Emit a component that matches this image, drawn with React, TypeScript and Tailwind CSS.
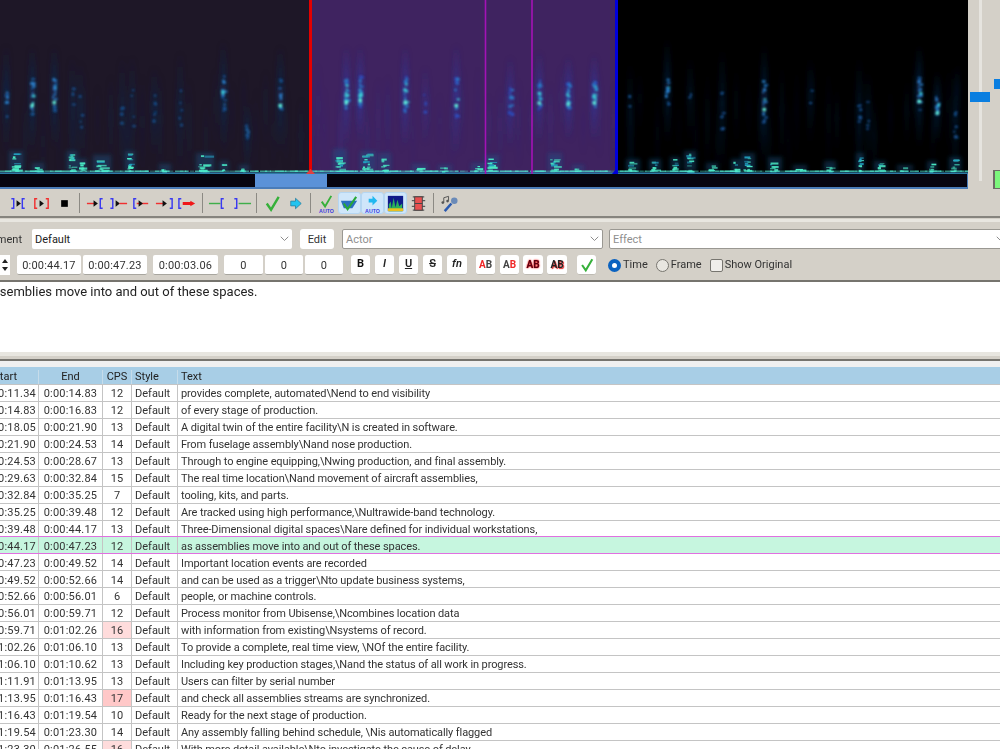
import React from "react";

const FONT = "font-['Roboto','Noto_Sans',sans-serif]";

function makeRng(seed: number) {
  let s = seed;
  return () => {
    s = (s * 16807) % 2147483647;
    return (s - 1) / 2147483646;
  };
}

type Streak = [number, number, number, number];
// x, top, bottom, strength
const STREAKS: Streak[] = [
  [6, 58, 130, 0.3], [32, 60, 128, 0.6], [54, 60, 122, 0.6], [72, 70, 135, 0.12], [80, 75, 140, 0.12],
  [122, 70, 150, 0.12], [132, 70, 140, 0.12], [154, 80, 130, 0.2], [180, 65, 150, 0.15], [223, 55, 125, 0.45],
  [247, 115, 145, 0.35], [280, 60, 128, 0.5], [346, 60, 122, 0.75], [360, 60, 118, 0.75], [405, 60, 122, 0.75],
  [456, 58, 130, 0.6], [425, 80, 120, 0.15], [510, 70, 125, 0.45], [539, 65, 118, 0.65], [568, 70, 115, 0.75],
  [594, 68, 115, 0.75], [630, 75, 150, 0.08], [667, 52, 118, 0.4], [690, 70, 115, 0.08], [722, 62, 145, 0.22],
  [764, 58, 138, 0.55], [810, 70, 120, 0.06], [859, 70, 150, 0.2], [868, 85, 140, 0.12], [919, 58, 122, 0.6],
  [937, 85, 118, 0.55], [955, 80, 155, 0.22],
];

// x, width, peak height above the floor
const BLOBS: [number, number, number][] = [
  [16, 10, 18], [38, 8, 6], [72, 7, 18], [82, 6, 10], [102, 14, 14], [130, 6, 18], [165, 8, 5], [205, 14, 16],
  [224, 5, 8], [244, 6, 4], [340, 10, 20], [368, 12, 18], [385, 8, 16], [420, 12, 5], [445, 10, 4], [478, 10, 6],
  [492, 10, 14], [555, 10, 16], [578, 8, 4], [633, 10, 10], [655, 8, 10], [675, 6, 12], [690, 8, 18], [712, 8, 6],
  [736, 6, 10], [748, 10, 16], [775, 10, 12], [800, 10, 4], [830, 8, 8], [860, 4, 16], [880, 8, 8], [905, 12, 4],
  [932, 6, 8], [955, 8, 12],
];

function Spectrogram() {
  const rng = makeRng(4242);
  const haze: React.ReactNode[] = [];
  const dots: React.ReactNode[] = [];
  for (let x = 4; x < 964; x += 7 + rng() * 12) {
    const top = 60 + rng() * 40;
    const sel = x > 310 && x < 616;
    haze.push(
      <rect key={`z${x}`} x={x} y={top} width={2 + rng() * 3} height={60 + rng() * 50}
        fill={sel ? "url(#fs)" : "url(#fn)"} opacity={0.1 + rng() * 0.2} />
    );
  }
  STREAKS.forEach(([x, top, bottom, k], i) => {
    const inSel = x > 310 && x < 616;
    haze.push(
      <rect key={`g${i}`} x={x - 3} y={top - 14} width={6.5} height={bottom - top + 40} rx={3}
        fill={inSel ? "url(#fs)" : "url(#fn)"} opacity={0.25 + k * 0.75} />
    );
    const n = Math.round(k * 30);
    const span = (bottom - top) * 0.55;
    const cy = (top + bottom) / 2 + 2;
    for (let j = 0; j < n; j++) {
      const y = cy + (rng() - 0.5) * span;
      const mid = 1 - Math.abs(y - cy) / (span * 0.7);
      const v = k * mid * (0.4 + rng() * 0.7);
      const c = v > 0.42 ? "#3ccfd8" : v > 0.2 ? "#2a7ec8" : inSel ? "#2d50c0" : "#174f8c";
      dots.push(<rect key={`d${i}-${j}`} x={x - 2 + rng() * 3} y={y} width={1.4 + rng() * 2.2} height={1.4 + rng() * 1.8} fill={c} />);
    }
    if (k >= 0.5) {
      dots.push(<rect key={`h${i}`} x={x - 1.5} y={cy + 8} width={3.5} height={3} fill="#62f0d8" />);
    }
  });
  const low: React.ReactNode[] = [];
  BLOBS.forEach(([x, w, h], i) => {
    haze.push(<rect key={`m${i}`} x={x - w / 2 - 2} y={171 - h - 2} width={w + 4} height={h + 2} fill="#155a8c" opacity={0.4} />);
    const n = Math.max(4, Math.round(h / 1.3));
    for (let j = 0; j < n; j++) {
      const y = 171 - Math.pow(rng(), 1.4) * h;
      const near = y > 165;
      low.push(
        <rect key={`b${i}-${j}`} x={x - w / 2 + rng() * w * 0.5} y={y} width={2 + rng() * w * 0.6} height={1 + rng() * 1.3}
          fill={near || rng() > 0.45 ? "#4aeac4" : "#22a0c0"} opacity={0.5 + rng() * 0.5} />
      );
    }
  });
  for (let x = 0; x < 966; x += 5) {
    low.push(<rect key={`l${x}`} x={x} y={170.6} width={3 + rng() * 11} height={1.2} fill="#52ecd0" opacity={0.3 + rng() * 0.6} />);
  }
  return (
    <svg className="block w-[968px] h-[174px]" viewBox="0 0 968 174">
      <defs>
        <filter id="b1" x="-5%" y="-5%" width="110%" height="110%">
          <feGaussianBlur stdDeviation="0.8" />
        </filter>
        <filter id="b2" x="-5%" y="-5%" width="110%" height="110%">
          <feGaussianBlur stdDeviation="2" />
        </filter>
        <filter id="b3" x="-5%" y="-5%" width="110%" height="110%">
          <feGaussianBlur stdDeviation="0.6" />
        </filter>
        <linearGradient id="fs" x1="0" y1="0" x2="0" y2="1">
          <stop offset="0" stopColor="#2a3aa8" stopOpacity="0" />
          <stop offset="0.45" stopColor="#2a40b4" stopOpacity="0.65" />
          <stop offset="1" stopColor="#2a3aa8" stopOpacity="0" />
        </linearGradient>
        <linearGradient id="fn" x1="0" y1="0" x2="0" y2="1">
          <stop offset="0" stopColor="#102a58" stopOpacity="0" />
          <stop offset="0.45" stopColor="#103266" stopOpacity="0.8" />
          <stop offset="1" stopColor="#102a58" stopOpacity="0" />
        </linearGradient>
      </defs>
      <rect x="0" y="0" width="310" height="174" fill="#1e1727" />
      <rect x="310" y="0" width="306" height="174" fill="#3f2360" />
      <rect x="616" y="0" width="352" height="174" fill="#000" />
      <g filter="url(#b2)">{haze}</g>
      <g filter="url(#b1)">{dots}</g>
      <g filter="url(#b3)">{low}</g>
      <rect x="0" y="172.4" width="968" height="1.6" fill="#2c7aa4" />
      <rect x="309" y="0" width="3" height="174" fill="#e40000" />
      <path d="M306 174 L310.5 169 L315 174Z" fill="#e04040" />
      <rect x="484.7" y="0" width="1.6" height="174" fill="#a313b5" />
      <rect x="531.2" y="0" width="1.6" height="174" fill="#a313b5" />
      <rect x="615" y="0" width="3" height="174" fill="#0000dc" />
      <path d="M612 174 L616 169 L618 174Z" fill="#0000dc" />
    </svg>
  );
}

const BL = "#3a3af0";
const RD = "#f03030";
const GR = "#3fae4a";

function LB({ x, c = BL }: { x: number; c?: string }) {
  return <path d={`M${x + 2.5} 6 H${x} V16 H${x + 2.5}`} fill="none" stroke={c} strokeWidth="1.5" />;
}
function RB({ x, c = BL }: { x: number; c?: string }) {
  return <path d={`M${x - 2.5} 6 H${x} V16 H${x - 2.5}`} fill="none" stroke={c} strokeWidth="1.5" />;
}
function Tri({ x }: { x: number }) {
  return <path d={`M${x} 7.5 L${x + 4.5} 11 L${x} 14.5Z`} fill="#111" />;
}
function Ln({ a, b, c = RD }: { a: number; b: number; c?: string }) {
  return <path d={`M${a} 11 H${b}`} stroke={c} strokeWidth="1.5" />;
}
const Check = () => <path d="M5 11 L9.5 17.5 L17.5 4" fill="none" stroke="#36b03a" strokeWidth="2.5" />;
const Arrow = () => <path d="M6 8.5 H11 V5.5 L17 11 L11 16.5 V13.5 H6Z" fill="#22c4f0" stroke="#2a7a9a" strokeWidth="0.8" />;

const ICONS: React.ReactNode[] = [
  <><RB x={6} /><Tri x={9} /><LB x={15} /></>,
  <><LB x={4} c={RD} /><Tri x={9} /><RB x={18} c={RD} /></>,
  <rect x="7.5" y="7.5" width="7" height="7" fill="#000" />,
  <><Ln a={2} b={10} /><Tri x={9} /><LB x={16} /></>,
  <><RB x={5} /><Tri x={8} /><Ln a={12} b={20} /></>,
  <><LB x={3} /><Ln a={6} b={18} /><Tri x={8} /></>,
  <><Ln a={2} b={10} /><Tri x={9} /><RB x={19} /></>,
  <><LB x={2} /><path d="M6 9.5 H14 V8 L19 11 L14 14 V12.5 H6Z" fill="#f01818" /></>,
  <><Ln a={1} b={13} c={GR} /><LB x={14} /></>,
  <><RB x={6} /><Ln a={8} b={21} c={GR} /></>,
];

function TB({ children, active }: { children: React.ReactNode; active?: boolean }) {
  return (
    <div className={`w-[23px] h-[22px] flex items-center justify-center rounded-[3px] shrink-0 ${active ? "bg-[#cfe6fa] border border-[#b5d6f2]" : ""}`}>
      <svg viewBox="0 0 22 22" className="w-[21px] h-[21px] shrink-0">{children}</svg>
    </div>
  );
}
const Sep = () => <div className="w-[1.5px] h-[20px] bg-[#8c8a84] ml-[2.5px] mr-[4px] shrink-0" />;

const AutoLabel = () => (
  <text x="11" y="21" textAnchor="middle" fontSize="5.5" fontFamily="Liberation Sans, sans-serif" fontWeight="700" fill="#3a3ae0">AUTO</text>
);

function Toolbar() {
  return (
    <div className="h-[29px] bg-[#d4d0c8] border-b-2 border-[#86847e] flex items-center pl-[7px] pt-[1px] shrink-0">
      {ICONS.slice(0, 3).map((c, i) => <TB key={i}>{c}</TB>)}
      <Sep />
      {ICONS.slice(3, 8).map((c, i) => <TB key={i}>{c}</TB>)}
      <Sep />
      {ICONS.slice(8, 10).map((c, i) => <TB key={i}>{c}</TB>)}
      <Sep />
      <TB><Check /></TB>
      <TB><Arrow /></TB>
      <Sep />
      <TB>
        <path d="M6 9 L9.5 14 L16 3" fill="none" stroke="#36b03a" strokeWidth="2" />
        <AutoLabel />
      </TB>
      <TB active>
        <path d="M2 8 H15 L19 8 L14 16 H5Z" fill="#2a6ec0" />
        <path d="M5 11 L9 17 L18 4" fill="none" stroke="#28a838" strokeWidth="2.2" />
      </TB>
      <TB active>
        <path d="M7 6 H11 V3 L16 8 L11 13 V10 H7Z" fill="#22b8f0" />
        <AutoLabel />
      </TB>
      <TB active>
        <rect x="3" y="3" width="16" height="16" fill="#101a8a" />
        <path d="M4 19 V12 L6 9 L7 16 L9 5 L11 15 L13 7 L15 14 L18 11 V19Z" fill="#2ab05a" />
        <path d="M3 19 V16 H19 V19Z" fill="#e8c020" />
      </TB>
      <TB>
        <path d="M5 4 H17 M5 18 H17 M4 8 H18 M4 14 H18" stroke="#5a5a5a" strokeWidth="1.4" />
        <rect x="7" y="4" width="8" height="14" fill="#e85050" stroke="#444" strokeWidth="1" />
        <path d="M7 11 H15" stroke="#444" strokeWidth="1" />
      </TB>
      <Sep />
      <TB>
        <path d="M5 10 V5 L10 3.5 V8" fill="none" stroke="#555" strokeWidth="1" />
        <circle cx="4" cy="10" r="1.4" fill="#555" />
        <circle cx="9" cy="8.5" r="1.4" fill="#555" />
        <path d="M6 19 L13 11" stroke="#2a5ab0" strokeWidth="2.6" />
        <circle cx="16" cy="8" r="3.4" fill="#6a8ab8" />
      </TB>
    </div>
  );
}

function Chevron() {
  return (
    <svg viewBox="0 0 12 8" className="w-[9px] h-[6px] shrink-0">
      <path d="M1 1 L6 6 L11 1" fill="none" stroke="#8a8a8a" strokeWidth="1.3" />
    </svg>
  );
}

function Combo({ label, w, muted, bordered }: { label: string; w: string; muted?: boolean; bordered?: boolean }) {
  return (
    <div className={`${w} h-[20px] bg-white rounded-[2px] flex items-center justify-between pl-[3px] pr-[3px] shrink-0 ${bordered ? "border border-[#9a9892]" : ""}`}>
      <span className={`pt-[2px] ${muted ? "text-[#8f8f8f]" : "text-[#222]"}`}>{label}</span>
      <Chevron />
    </div>
  );
}

function Field({ v, w, ml }: { v: string; w: string; ml: string }) {
  return (
    <div className={`${w} ${ml} h-[20px] pt-[3px] bg-white border-b border-[#a8a69f] rounded-[2px] flex items-center justify-center shrink-0 text-[#333] tracking-[0.2px]`}>
      {v}
    </div>
  );
}

function Btn({ w = "w-[19px]", ml, children }: { w?: string; ml: string; children: React.ReactNode }) {
  return (
    <div className={`${w} ${ml} h-[20px] bg-white rounded-[3px] border-b border-[#bdbab2] flex items-center justify-center shrink-0`}>
      {children}
    </div>
  );
}

type Row = [string, string, number, string];
const ROWS: Row[] = [
  ["0:00:11.34", "0:00:14.83", 12, "provides complete, automated\\Nend to end visibility"],
  ["0:00:14.83", "0:00:16.83", 12, "of every stage of production."],
  ["0:00:18.05", "0:00:21.90", 13, "A digital twin of the entire facility\\N is created in software."],
  ["0:00:21.90", "0:00:24.53", 14, "From fuselage assembly\\Nand nose production."],
  ["0:00:24.53", "0:00:28.67", 13, "Through to engine equipping,\\Nwing production, and final assembly."],
  ["0:00:29.63", "0:00:32.84", 15, "The real time location\\Nand movement of aircraft assemblies,"],
  ["0:00:32.84", "0:00:35.25", 7, "tooling, kits, and parts."],
  ["0:00:35.25", "0:00:39.48", 12, "Are tracked using high performance,\\Nultrawide-band technology."],
  ["0:00:39.48", "0:00:44.17", 13, "Three-Dimensional digital spaces\\Nare defined for individual workstations,"],
  ["0:00:44.17", "0:00:47.23", 12, "as assemblies move into and out of these spaces."],
  ["0:00:47.23", "0:00:49.52", 14, "Important location events are recorded"],
  ["0:00:49.52", "0:00:52.66", 14, "and can be used as a trigger\\Nto update business systems,"],
  ["0:00:52.66", "0:00:56.01", 6, "people, or machine controls."],
  ["0:00:56.01", "0:00:59.71", 12, "Process monitor from Ubisense,\\Ncombines location data"],
  ["0:00:59.71", "0:01:02.26", 16, "with information from existing\\Nsystems of record."],
  ["0:01:02.26", "0:01:06.10", 13, "To provide a complete, real time view, \\NOf the entire facility."],
  ["0:01:06.10", "0:01:10.62", 13, "Including key production stages,\\Nand the status of all work in progress."],
  ["0:01:11.91", "0:01:13.95", 13, "Users can filter by serial number"],
  ["0:01:13.95", "0:01:16.43", 17, "and check all assemblies streams are synchronized."],
  ["0:01:16.43", "0:01:19.54", 10, "Ready for the next stage of production."],
  ["0:01:19.54", "0:01:23.30", 14, "Any assembly falling behind schedule, \\Nis automatically flagged"],
  ["0:01:23.30", "0:01:26.55", 16, "With more detail available\\Nto investigate the cause of delay."],
];

function cpsBg(c: number) {
  if (c === 17) return "bg-[#ffc8c8]";
  if (c === 16) return "bg-[#ffdcdc]";
  return "";
}

function TableRow({ r, active, before }: { r: Row; active: boolean; before: boolean }) {
  const cell = "h-full flex items-center shrink-0 border-r border-[#c4c4c4] overflow-hidden whitespace-nowrap";
  const line = active || before ? "border-[#e070e0]" : "border-[#c4c4c4]";
  return (
    <div className={`h-[16.95px] flex shrink-0 border-b ${line} ${active ? "bg-[#c6f6df]" : "bg-white"}`}>
      <div className={`${cell} w-[39px] justify-end pr-[2px] pt-[3px] tracking-[0.2px]`}>{r[0]}</div>
      <div className={`${cell} w-[64px] justify-center pt-[3px] tracking-[0.2px]`}>{r[1]}</div>
      <div className={`${cell} w-[29px] justify-center pt-[3px] ${cpsBg(r[2])}`}>{r[2]}</div>
      <div className={`${cell} w-[46px] pl-[3px] pt-[3px]`}>Default</div>
      <div className="h-full pt-[3px] flex items-center pl-[3px] whitespace-nowrap tracking-[-0.1px]">{r[3]}</div>
    </div>
  );
}

export default function App() {
  return (
    <div className={`w-[1000px] h-[749px] overflow-hidden bg-[#d4d0c8] flex flex-col text-[11px] text-[#333] ${FONT}`}>
      <div className="h-[189px] flex shrink-0">
        <div className="w-[968px] shrink-0 flex flex-col">
          <Spectrogram />
          <div className="h-[15px] bg-[#07050f] border-b-2 border-r border-[#4a7cb8] flex">
            <div className="w-[255px]" />
            <div className="w-[72px] bg-[#5b92d8]" />
          </div>
        </div>
        <div className="flex-1 flex relative">
          <div className="ml-[11px] w-[3px] h-[181px] bg-[#e6e4df]" />
          <div className="absolute left-[2px] top-[92px] w-[20px] h-[10px] bg-[#0a7ee0]" />
          <div className="absolute left-[26px] top-[79px] w-[6px] h-[10px] bg-[#0a7ee0]" />
          <div className="absolute left-[25px] top-[170px] w-[7px] h-[19px] bg-[#7cf77c] border-l-2 border-t border-b border-[#6d6b66]" />
        </div>
      </div>
      <Toolbar />
      <div className="h-[3px] bg-[#e8e6e0] mt-[1px] shrink-0" />
      <div className="h-[7px] shrink-0" />
      {/* style row */}
      <div className="h-[20px] flex items-center shrink-0 whitespace-nowrap">
        <div className="w-[32px] flex justify-end overflow-hidden pr-[10px] pt-[2px] shrink-0"><span>Comment</span></div>
        <Combo label="Default" w="w-[260px]" />
        <div className="w-[34px] ml-[8px] h-[20px] pt-[2px] bg-white rounded-[3px] flex items-center justify-center shrink-0">Edit</div>
        <div className="ml-[8px]"><Combo label="Actor" w="w-[261px]" muted bordered /></div>
        <div className="ml-[6px]"><Combo label="Effect" w="w-[400px]" muted bordered /></div>
      </div>
      {/* timing row */}
      <div className="h-[20px] mt-[6px] flex items-center shrink-0 whitespace-nowrap">
        <div className="w-[10px] h-[20px] bg-white flex flex-col items-center justify-center gap-[4px] shrink-0">
          <div className="w-0 h-0 border-x-[3px] border-x-transparent border-b-[4px] border-b-[#222]" />
          <div className="w-0 h-0 border-x-[3px] border-x-transparent border-t-[4px] border-t-[#222]" />
        </div>
        <Field v="0:00:44.17" w="w-[64px]" ml="ml-[7px]" />
        <Field v="0:00:47.23" w="w-[64px]" ml="ml-[2px]" />
        <Field v="0:00:03.06" w="w-[65px]" ml="ml-[6px]" />
        <Field v="0" w="w-[39px]" ml="ml-[6px]" />
        <Field v="0" w="w-[38px]" ml="ml-[2px]" />
        <Field v="0" w="w-[38px]" ml="ml-[2px]" />
        <Btn ml="ml-[8px]"><span className="font-bold text-[#111]">B</span></Btn>
        <Btn ml="ml-[5px]"><span className="italic font-semibold text-[#222]">I</span></Btn>
        <Btn ml="ml-[5px]"><span className="underline font-semibold text-[#222]">U</span></Btn>
        <Btn ml="ml-[5px]"><span className="line-through font-semibold text-[#222]">S</span></Btn>
        <Btn w="w-[20px]" ml="ml-[5px]"><span className="italic font-semibold text-[#222]">fn</span></Btn>
        <Btn ml="ml-[9px]"><span className="font-bold text-[10px]"><span className="text-[#f02828]">A</span><span className="text-[#444]">B</span></span></Btn>
        <Btn ml="ml-[5px]"><span className="font-bold text-[10px]"><span className="text-[#444]">A</span><span className="text-[#f02828]">B</span></span></Btn>
        <Btn w="w-[20px]" ml="ml-[4px]"><span className="font-bold text-[10px] text-[#5a0010] [text-shadow:0_0_2px_#f02020,0_0_1px_#f02020]">AB</span></Btn>
        <Btn w="w-[20px]" ml="ml-[4px]"><span className="font-bold text-[10px] text-[#222] [text-shadow:1px_1px_1px_#e02020]">AB</span></Btn>
        <Btn ml="ml-[10px]">
          <svg viewBox="0 0 22 22" className="w-[18px] h-[18px]"><Check /></svg>
        </Btn>
        <div className="ml-[12px] w-[13px] h-[13px] rounded-full bg-white border-[4px] border-[#0a62c0] shrink-0" />
        <span className="ml-[2px] pt-[1px] text-[#333]">Time</span>
        <div className="ml-[8px] w-[13px] h-[13px] rounded-full bg-[#e8e6e0] border border-[#77756f] shrink-0" />
        <span className="ml-[2px] pt-[1px] text-[#333]">Frame</span>
        <div className="ml-[8px] w-[13px] h-[13px] rounded-[2px] bg-[#f0eeea] border border-[#77756f] shrink-0" />
        <span className="ml-[2px] pt-[1px] text-[#333]">Show Original</span>
      </div>
      <div className="h-[7px] shrink-0 border-b-2 border-[#76746e]" />
      {/* editor */}
      <div className="h-[70px] bg-white shrink-0 pt-[1px] text-[13px] leading-[17px] text-[#222] overflow-hidden whitespace-nowrap">
        <div className="ml-[-31px]">as assemblies move into and out of these spaces.</div>
      </div>
      {/* splitter */}
      <div className="h-[4px] bg-[#e8e6e0] shrink-0" />
      <div className="h-[3px] shrink-0 border-b-2 border-[#76746e] box-content" />
      <div className="h-[6px] bg-[#f0f0f0] shrink-0" />
      {/* table */}
      <div className="flex-1 min-h-0 overflow-hidden flex flex-col bg-white">
        <div className="h-[18px] pt-[3px] bg-[#a8cee6] flex shrink-0 text-[#222] border-b border-[#c4c4c4]">
          <div className="w-[39px] flex justify-end overflow-hidden items-center pr-[21px] border-r border-[#c6dcea] shrink-0"><span>Start</span></div>
          <div className="w-[64px] flex items-center justify-center border-r border-[#c6dcea] shrink-0">End</div>
          <div className="w-[29px] flex items-center justify-center border-r border-[#c6dcea] shrink-0">CPS</div>
          <div className="w-[46px] flex items-center pl-[3px] border-r border-[#c6dcea] shrink-0">Style</div>
          <div className="flex items-center pl-[3px]">Text</div>
        </div>
        {ROWS.map((r, i) => <TableRow key={i} r={r} active={i === 9} before={i === 8} />)}
      </div>
    </div>
  );
}
